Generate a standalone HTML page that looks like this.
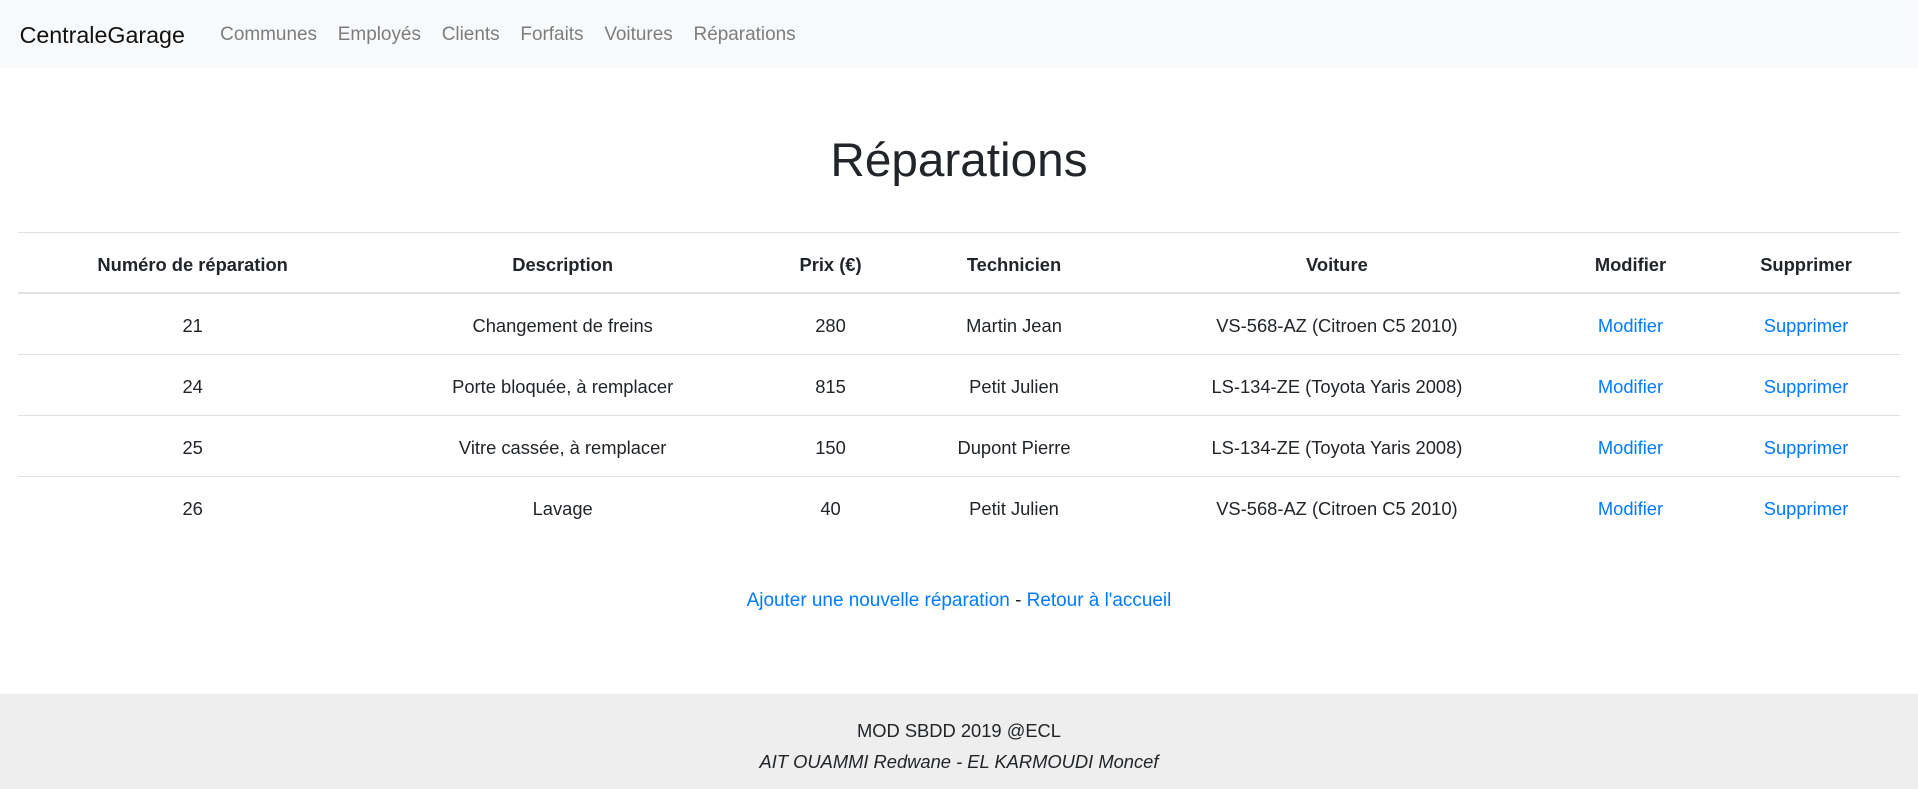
<!DOCTYPE html>
<html><head><meta charset="utf-8"><style>
html,body{margin:0;padding:0;background:#fff;}
body{width:1918px;height:789px;overflow:hidden;}
#w{zoom:1.2232;width:1568px;position:relative;font-family:"Liberation Sans",sans-serif;color:#212529;font-size:15px;}
.nav{height:56px;background:#f8f9fa;position:relative;}
.brand{position:absolute;left:16px;top:18px;font-size:19px;color:#111;}
.links{position:absolute;left:180px;top:20px;font-size:15.5px;color:rgba(0,0,0,.5);}
.links span{margin-right:17px;}
h1{position:absolute;top:106px;left:0;width:1568px;text-align:center;margin:0;font-weight:400;font-size:39px;line-height:50px;}
table{position:absolute;left:15px;top:190px;width:1538px;border-collapse:collapse;table-layout:fixed;}
td,th{text-align:center;height:46px;padding:3px 0 0;border-top:1px solid #dee2e6;}
th{font-weight:700;height:45px;border-bottom:2px solid #dee2e6;}
a{color:#007bff;text-decoration:none;}
.bot{position:absolute;top:482px;width:1568px;text-align:center;font-size:15.5px;}
.foot{position:absolute;top:567px;height:78px;width:1568px;background:#eee;text-align:center;font-size:15px;}
</style></head><body><div id="w">
<div class="nav"><div class="brand">CentraleGarage</div>
<div class="links"><span>Communes</span><span>Employés</span><span>Clients</span><span>Forfaits</span><span>Voitures</span><span>Réparations</span></div></div>
<h1>Réparations</h1>
<table>
<colgroup><col style="width:285px"><col style="width:320px"><col style="width:118px"><col style="width:182px"><col style="width:346px"><col style="width:134px"><col style="width:153px"></colgroup>
<tr><th>Numéro de réparation</th><th>Description</th><th>Prix (€)</th><th>Technicien</th><th>Voiture</th><th>Modifier</th><th>Supprimer</th></tr>
<tr><td>21</td><td>Changement de freins</td><td>280</td><td>Martin Jean</td><td>VS-568-AZ (Citroen C5 2010)</td><td><a>Modifier</a></td><td><a>Supprimer</a></td></tr>
<tr><td>24</td><td>Porte bloquée, à remplacer</td><td>815</td><td>Petit Julien</td><td>LS-134-ZE (Toyota Yaris 2008)</td><td><a>Modifier</a></td><td><a>Supprimer</a></td></tr>
<tr><td>25</td><td>Vitre cassée, à remplacer</td><td>150</td><td>Dupont Pierre</td><td>LS-134-ZE (Toyota Yaris 2008)</td><td><a>Modifier</a></td><td><a>Supprimer</a></td></tr>
<tr><td>26</td><td>Lavage</td><td>40</td><td>Petit Julien</td><td>VS-568-AZ (Citroen C5 2010)</td><td><a>Modifier</a></td><td><a>Supprimer</a></td></tr>
</table>
<div class="bot"><a>Ajouter une nouvelle réparation</a> - <a>Retour à l'accueil</a></div>
<div class="foot"><div style="position:absolute;top:22px;width:100%">MOD SBDD 2019 @ECL</div><div style="position:absolute;top:47px;width:100%;font-style:italic">AIT OUAMMI Redwane - EL KARMOUDI Moncef</div></div>
</div></body></html>
